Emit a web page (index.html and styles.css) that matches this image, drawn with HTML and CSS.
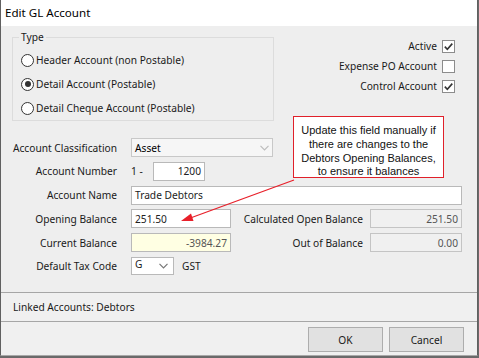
FILE: index.html
```html
<!DOCTYPE html>
<html>
<head>
<meta charset="utf-8">
<link rel="stylesheet" href="styles.css">
</head>
<body>
<div class="window">
  <div class="titlebar">Edit GL Account</div>
  <div class="content">
    <div class="top">
      <fieldset class="group">
        <legend>Type</legend>
        <div class="radio"><span class="rb"></span>Header Account (non Postable)</div>
        <div class="radio"><span class="rb on"></span>Detail Account (Postable)</div>
        <div class="radio"><span class="rb"></span>Detail Cheque Account (Postable)</div>
      </fieldset>
      <div class="checks">
        <div class="chk">Active<span class="cb"><svg width="11" height="11" viewBox="0 0 11 11"><path d="M1.8 5.6 L4.3 8.2 L9.3 2.6" fill="none" stroke="#333" stroke-width="1.6"/></svg></span></div>
        <div class="chk">Expense PO Account<span class="cb"></span></div>
        <div class="chk">Control Account<span class="cb"><svg width="11" height="11" viewBox="0 0 11 11"><path d="M1.8 5.6 L4.3 8.2 L9.3 2.6" fill="none" stroke="#333" stroke-width="1.6"/></svg></span></div>
      </div>
    </div>
    <div class="form">
      <div class="row">
        <span class="lbl">Account Classification</span>
        <span class="combo combo-wide disabled"><span class="ctext">Asset</span><svg class="chev" width="9" height="6" viewBox="0 0 9 6"><path d="M0.5 0.8 L4.5 4.8 L8.5 0.8" fill="none" stroke="#bdbdbd" stroke-width="1.2"/></svg></span>
      </div>
      <div class="row">
        <span class="lbl">Account Number</span>
        <span class="prefix">1 -</span>
        <span class="input num-input right">1200</span>
      </div>
      <div class="row">
        <span class="lbl">Account Name</span>
        <span class="input name-input">Trade Debtors</span>
      </div>
      <div class="row">
        <span class="lbl">Opening Balance</span>
        <span class="input bal-input">251.50</span>
        <span class="rlbl">Calculated Open Balance</span>
        <span class="input ro-input right">251.50</span>
      </div>
      <div class="row">
        <span class="lbl">Current Balance</span>
        <span class="input bal-input yellow right">-3984.27</span>
        <span class="rlbl">Out of Balance</span>
        <span class="input ro-input right">0.00</span>
      </div>
      <div class="row">
        <span class="lbl">Default Tax Code</span>
        <span class="combo combo-small"><span class="ctext">G</span><svg class="chev" width="9" height="6" viewBox="0 0 9 6"><path d="M0.5 0.8 L4.5 4.8 L8.5 0.8" fill="none" stroke="#777" stroke-width="1.2"/></svg></span>
        <span class="gst">GST</span>
      </div>
    </div>
    <div class="callout">Update this field manually if<br>there are changes to the<br>Debtors Opening Balances,<br>to ensure it balances</div>
    <svg class="arrow" width="479" height="266" viewBox="0 0 479 266">
      <line x1="293" y1="154" x2="188" y2="192.5" stroke="#e8202a" stroke-width="1.3"/>
      <path d="M180 195 L190 187.5 L192.5 195 Z" fill="#e8202a"/>
    </svg>
  </div>
  <div class="linked">Linked Accounts: Debtors</div>
  <div class="buttons">
    <button class="btn">OK</button>
    <button class="btn">Cancel</button>
  </div>
</div>
</body>
</html>
```
FILE: styles.css
```css
html, body {
  margin: 0;
  padding: 0;
}
body {
  background: #6a6a6a;
  width: 479px;
  height: 358px;
  overflow: hidden;
  font-family: "Noto Sans", "Liberation Sans", sans-serif;
  font-size: 10.2px;
  color: #1a1a1a;
}
.window {
  width: 476px;
  height: 355px;
  background: #f0f0f0;
  border-left: 1px solid #606060;
  border-right: 1px solid #606060;
  border-bottom: 1px solid #a8a8a8;
  display: flex;
  flex-direction: column;
}
.titlebar {
  height: 26px;
  background: #ffffff;
  font-size: 11.6px;
  line-height: 26px;
  padding-left: 4px;
  color: #000;
}
.content {
  position: relative;
  height: 266px;
  background: #eeeeee;
}
.top {
  display: flex;
  justify-content: space-between;
  padding-left: 11px;
  padding-right: 22px;
}
.group {
  margin: 5px 0 0 0;
  padding: 5px 0 0 8px;
  width: 252px;
  border: 1px solid #dcdcdc;
  min-width: 0;
  box-sizing: content-box;
}
.group legend {
  padding: 0 2px;
  margin-left: -2px;
  line-height: 12px;
  height: 12px;
}
.radio {
  height: 24px;
  display: flex;
  align-items: center;
  gap: 2px;
}
.rb {
  width: 11px;
  height: 11px;
  border: 1px solid #333;
  border-radius: 50%;
  background: #fff;
  display: flex;
  align-items: center;
  justify-content: center;
  box-sizing: content-box;
}
.rb.on::after {
  content: "";
  width: 6px;
  height: 6px;
  border-radius: 50%;
  background: #333;
}
.checks {
  padding-top: 10px;
  display: flex;
  flex-direction: column;
  align-items: flex-end;
}
.chk {
  height: 20px;
  display: flex;
  align-items: center;
  gap: 5px;
}
.cb {
  width: 11px;
  height: 11px;
  border: 1px solid #8c8c8c;
  background: #fff;
  display: flex;
  align-items: center;
  justify-content: center;
}
.form {
  margin-top: 17px;
  display: flex;
  flex-direction: column;
  gap: 4.8px;
}
.row {
  height: 19px;
  display: flex;
  align-items: center;
}
.lbl {
  width: 116px;
  text-align: right;
  margin-right: 14px;
  flex: none;
}
.input, .combo {
  height: 19px;
  box-sizing: border-box;
  border: 1px solid #b9b9b9;
  background: #fff;
  display: flex;
  align-items: center;
  padding: 0 3px;
  flex: none;
  color: #222;
}
.input.right {
  justify-content: flex-end;
}
.prefix {
  width: 22px;
}
.num-input {
  width: 52px;
}
.name-input {
  width: 331px;
}
.bal-input {
  width: 100px;
}
.yellow {
  background: #ffffe3;
  color: #555;
}
.rlbl {
  width: 132px;
  text-align: right;
  margin-right: 7px;
}
.ro-input {
  width: 92px;
  background: #f0f0f0;
  border-color: #c4c4c4;
  color: #555;
}
.combo {
  justify-content: space-between;
}
.combo-wide {
  width: 142px;
  background: #f6f6f6;
  border-color: #c8c8c8;
  color: #000;
}
.combo-small {
  width: 43px;
  height: 18px;
  padding: 0 5px 0 3px;
  align-items: flex-start;
}
.combo-small .ctext {
  line-height: 13px;
}
.combo-small .chev {
  margin-top: 5px;
}
.gst {
  margin-left: 8px;
}
.callout {
  position: absolute;
  left: 292px;
  top: 90px;
  width: 151px;
  height: 62px;
  border: 1.5px solid #e0202a;
  background: #fff;
  font-family: "Liberation Sans", Arial, sans-serif;
  font-size: 11px;
  line-height: 13.8px;
  text-align: center;
  padding-top: 7px;
  box-sizing: border-box;
  color: #111;
}
.arrow {
  position: absolute;
  left: 0;
  top: 0;
  pointer-events: none;
}
.linked {
  height: 28px;
  border-top: 1px solid #a6a6a6;
  border-bottom: 1px solid #a6a6a6;
  padding-left: 12px;
  display: flex;
  align-items: center;
}
.buttons {
  flex: 1;
  display: flex;
  justify-content: flex-end;
  align-items: flex-start;
  gap: 6px;
  padding-top: 5px;
  padding-right: 13px;
}
.btn {
  width: 75px;
  height: 25px;
  background: #e1e1e1;
  border: 1px solid #adadad;
  font-family: "Noto Sans", "Liberation Sans", sans-serif;
  font-size: 10.2px;
  color: #1a1a1a;
  padding: 0;
}
```
